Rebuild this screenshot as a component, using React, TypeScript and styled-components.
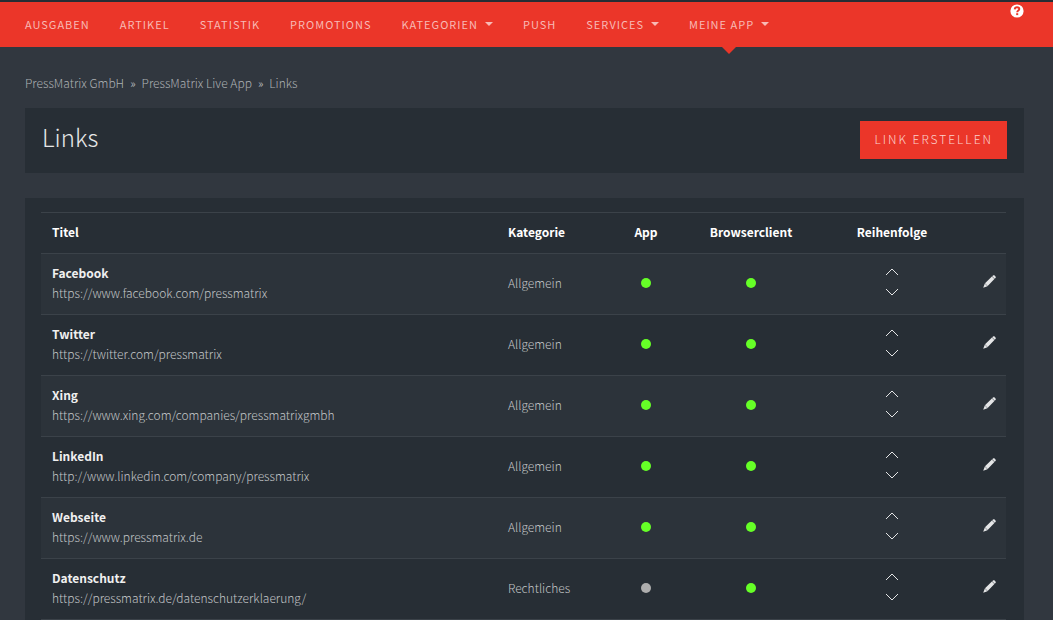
import React from 'react';
import styled, { createGlobalStyle } from 'styled-components';

const GlobalStyle = createGlobalStyle`
  * { box-sizing: border-box; }
  body {
    margin: 0;
    background: #31373f;
    color: #c2c5c7;
    font-family: "Source Sans Pro", "Noto Sans CJK SC", "Noto Sans", sans-serif;
    font-size: 12px;
    font-weight: 300;
    line-height: 20px;
  }
`;

const TopBar = styled.header`
  display: flex;
  justify-content: space-between;
  align-items: flex-start;
  height: 47px;
  padding: 0 29px 0 25px;
  background: #eb3629;
  border-top: 2px solid #272d34;
`;

const NavList = styled.ul`
  display: flex;
  gap: 30px;
  height: 100%;
  margin: 0;
  padding: 0;
  list-style: none;
`;

const NavItem = styled.li`
  position: relative;
  display: flex;
  align-items: center;
  padding-bottom: 1px;
`;

const NavLink = styled.a`
  display: flex;
  align-items: center;
  gap: 7px;
  color: #f8bab5;
  font-size: 11px;
  font-weight: 400;
  letter-spacing: 1px;
  text-decoration: none;
  text-transform: uppercase;
  white-space: nowrap;
`;

const Caret = styled.span`
  border: 4px solid transparent;
  border-top-color: currentColor;
  border-bottom: 0;
`;

const ActiveMarker = styled.span`
  position: absolute;
  top: 100%;
  left: 50%;
  margin-left: -7px;
  border: 7px solid transparent;
  border-top-color: #eb3629;
  border-bottom: 0;
`;

const HelpLink = styled.a`
  display: flex;
  margin-top: 2px;
`;

const Page = styled.main`
  padding: 26px 29px 0 25px;
`;

const Breadcrumb = styled.nav`
  display: flex;
  gap: 6px;
  margin-bottom: 15px;
`;

const Crumb = styled.a`
  color: #acb0b3;
  text-decoration: none;
`;

const TitlePanel = styled.section`
  display: flex;
  align-items: center;
  justify-content: space-between;
  height: 65px;
  margin-bottom: 25px;
  padding: 0 17px 2px;
  background: #272e35;
`;

const Title = styled.h1`
  margin: 0 0 6px;
  color: #e6e7e8;
  font-size: 24px;
  font-weight: 300;
  line-height: 32px;
`;

const CreateButton = styled.button`
  height: 38px;
  padding: 0 14px 2px;
  border: 0;
  background: #eb3629;
  color: #fbd0cc;
  font: inherit;
  letter-spacing: 2px;
  text-transform: uppercase;
`;

const TablePanel = styled.section`
  padding: 14px 18px 0 16px;
  background: #272e35;
`;

const LinkTable = styled.table`
  width: 100%;
  border-collapse: separate;
  border-spacing: 0;
  border-bottom: 1px solid #3b4249;
  table-layout: fixed;
`;

const Col = styled.col<{ $width?: number }>`
  width: ${({ $width }) => ($width ? `${$width}px` : 'auto')};
`;

const HeadCell = styled.th<{ $center?: boolean }>`
  height: 41px;
  padding: 0 11px 2px;
  border-top: 1px solid #3b4249;
  color: #fff;
  font-weight: 700;
  text-align: ${({ $center }) => ($center ? 'center' : 'left')};
`;

const Row = styled.tr`
  &:nth-child(odd) { background: #2c333a; }
`;

const Cell = styled.td<{ $center?: boolean }>`
  height: 61px;
  padding: 0 11px 2px;
  border-top: 1px solid #3b4249;
  text-align: ${({ $center }) => ($center ? 'center' : 'left')};
`;

const EditCell = styled(Cell)`
  padding: 0 10px 2px;
  text-align: right;
`;

const LinkName = styled.strong`
  display: block;
  color: #f0f0f0;
  font-weight: 700;
`;

const Dot = styled.span<{ $on: boolean }>`
  display: block;
  width: 10px;
  height: 10px;
  margin: 0 auto;
  border-radius: 50%;
  background: ${({ $on }) => ($on ? '#66ff27' : '#aeaeae')};
`;

const Sorter = styled.div`
  display: flex;
  flex-direction: column;
  align-items: center;
  padding-bottom: 2px;
`;

const IconButton = styled.button`
  display: inline-flex;
  align-items: center;
  justify-content: center;
  height: 20px;
  padding: 0;
  border: 0;
  background: none;
  color: #e4e5e6;
`;

const Chevron = ({ up = false }: { up?: boolean }) => (
  <svg width="14" height="8" viewBox="0 0 14 8" fill="none" stroke="currentColor" aria-hidden="true">
    <path d={up ? 'M1 7 7 1l6 6' : 'M1 1l6 6 6-6'} />
  </svg>
);

const Pencil = () => (
  <svg width="13" height="14" viewBox="0 0 13 14" fill="currentColor" aria-hidden="true">
    <path d="M9.200 1.300 10 .5c.5-.5 1.100-.5 1.600 0l.9.900c.5.5.5 1.100 0 1.600l-.8.800zM8.900 1.600l2.500 2.500-6.700 6.800L2 8.300zM1.800 8.500l2.700 2.700L.2 12.800z" />
  </svg>
);

const Help = () => (
  <svg width="14" height="14" viewBox="0 0 14 14" aria-hidden="true">
    <circle cx="7" cy="7" r="6.600" fill="#fff" />
    <path d="M4.700 5.300C4.900 3.800 5.800 3.300 7 3.300c1.400 0 2.300.7 2.300 1.800C9.300 6.600 7.200 6.600 7.200 8.300" fill="none" stroke="#eb3629" strokeWidth="1.900" />
    <rect x="6.200" y="9.200" width="2" height="1.900" fill="#eb3629" />
  </svg>
);

const navigation = [
  { label: 'Ausgaben' },
  { label: 'Artikel' },
  { label: 'Statistik' },
  { label: 'Promotions' },
  { label: 'Kategorien', menu: true },
  { label: 'Push' },
  { label: 'Services', menu: true },
  { label: 'Meine App', menu: true, active: true },
];

const links = [
  { name: 'Facebook', url: 'https://www.facebook.com/pressmatrix', category: 'Allgemein', app: true },
  { name: 'Twitter', url: 'https://twitter.com/pressmatrix', category: 'Allgemein', app: true },
  { name: 'Xing', url: 'https://www.xing.com/companies/pressmatrixgmbh', category: 'Allgemein', app: true },
  { name: 'LinkedIn', url: 'http://www.linkedin.com/company/pressmatrix', category: 'Allgemein', app: true },
  { name: 'Webseite', url: 'https://www.pressmatrix.de', category: 'Allgemein', app: true },
  { name: 'Datenschutz', url: 'https://pressmatrix.de/datenschutzerklaerung/', category: 'Rechtliches', app: false },
];

export default function App() {
  return (
    <>
      <GlobalStyle />
      <TopBar>
        <NavList>
          {navigation.map(({ label, menu, active }) => (
            <NavItem key={label}>
              <NavLink href="#">
                {label}
                {menu && <Caret />}
              </NavLink>
              {active && <ActiveMarker />}
            </NavItem>
          ))}
        </NavList>
        <HelpLink href="#" aria-label="Hilfe"><Help /></HelpLink>
      </TopBar>
      <Page>
        <Breadcrumb>
          <Crumb href="#">PressMatrix GmbH</Crumb>
          <span>»</span>
          <Crumb href="#">PressMatrix Live App</Crumb>
          <span>»</span>
          <Crumb href="#">Links</Crumb>
        </Breadcrumb>
        <TitlePanel>
          <Title>Links</Title>
          <CreateButton type="button">Link erstellen</CreateButton>
        </TitlePanel>
        <TablePanel>
          <LinkTable>
            <colgroup>
              <Col />
              <Col $width={107} />
              <Col $width={84} />
              <Col $width={126} />
              <Col $width={156} />
              <Col $width={36} />
            </colgroup>
            <thead>
              <tr>
                <HeadCell>Titel</HeadCell>
                <HeadCell>Kategorie</HeadCell>
                <HeadCell $center>App</HeadCell>
                <HeadCell $center>Browserclient</HeadCell>
                <HeadCell $center>Reihenfolge</HeadCell>
                <HeadCell />
              </tr>
            </thead>
            <tbody>
              {links.map((link) => (
                <Row key={link.name}>
                  <Cell>
                    <LinkName>{link.name}</LinkName>
                    {link.url}
                  </Cell>
                  <Cell>{link.category}</Cell>
                  <Cell $center><Dot $on={link.app} /></Cell>
                  <Cell $center><Dot $on /></Cell>
                  <Cell $center>
                    <Sorter>
                      <IconButton type="button" aria-label={`${link.name} nach oben`}><Chevron up /></IconButton>
                      <IconButton type="button" aria-label={`${link.name} nach unten`}><Chevron /></IconButton>
                    </Sorter>
                  </Cell>
                  <EditCell>
                    <IconButton type="button" aria-label={`${link.name} bearbeiten`}><Pencil /></IconButton>
                  </EditCell>
                </Row>
              ))}
            </tbody>
          </LinkTable>
        </TablePanel>
      </Page>
    </>
  );
}
